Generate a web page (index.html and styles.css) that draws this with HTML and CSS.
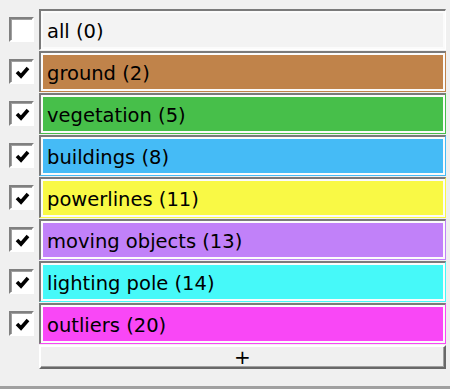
FILE: index.html
```html
<!DOCTYPE html>
<html lang="en">
  <head>
    <meta charset="UTF-8">
    <title>Classes</title>
    <link rel="stylesheet" href="styles.css">
  </head>
<body>
  <div class="panel">
    <div class="list">
      <div class="row">
        <span class="check"></span>
        <div class="frame plain"><div class="fill">all (0)</div></div>
      </div>
      <div class="row">
        <span class="check on"><svg viewBox="0 0 21 21"><polyline points="6,11 10,15 17,7"/></svg></span>
        <div class="frame ground"><div class="fill">ground (2)</div></div>
      </div>
      <div class="row">
        <span class="check on"><svg viewBox="0 0 21 21"><polyline points="6,11 10,15 17,7"/></svg></span>
        <div class="frame vegetation"><div class="fill">vegetation (5)</div></div>
      </div>
      <div class="row">
        <span class="check on"><svg viewBox="0 0 21 21"><polyline points="6,11 10,15 17,7"/></svg></span>
        <div class="frame buildings"><div class="fill">buildings (8)</div></div>
      </div>
      <div class="row">
        <span class="check on"><svg viewBox="0 0 21 21"><polyline points="6,11 10,15 17,7"/></svg></span>
        <div class="frame powerlines"><div class="fill">powerlines (11)</div></div>
      </div>
      <div class="row">
        <span class="check on"><svg viewBox="0 0 21 21"><polyline points="6,11 10,15 17,7"/></svg></span>
        <div class="frame moving"><div class="fill">moving objects (13)</div></div>
      </div>
      <div class="row">
        <span class="check on"><svg viewBox="0 0 21 21"><polyline points="6,11 10,15 17,7"/></svg></span>
        <div class="frame pole"><div class="fill">lighting pole (14)</div></div>
      </div>
      <div class="row">
        <span class="check on"><svg viewBox="0 0 21 21"><polyline points="6,11 10,15 17,7"/></svg></span>
        <div class="frame outliers"><div class="fill">outliers (20)</div></div>
      </div>
    </div>
    <button class="add">+</button>
  </div>
  <div class="bottom-edge"></div>
</body>
</html>
```

FILE: styles.css
```css
/* page */
body {
  margin: 0;
  background-color: #f0f0f0;
  font-family: "DejaVu Sans", Verdana, sans-serif;
  height: 389px;
  display: flex;
  flex-direction: column;
  overflow: hidden;
}

.panel {
  flex: 1;
  padding: 9px 4px 0 9px;
}

/* class rows */
.list {
  display: flex;
  flex-direction: column;
  gap: 1px;
}

.row {
  display: flex;
  align-items: center;
  gap: 5px;
  height: 41px;
}

.check {
  width: 21px;
  height: 21px;
  flex: none;
  background-color: #fff;
  border: 2px solid #fff;
  border-top-color: #808080;
  border-left-color: #808080;
  box-shadow: inset 1px 1px #a0a0a0;
}

.check svg {
  display: block;
  width: 21px;
  height: 21px;
}

.check polyline {
  fill: none;
  stroke: #000;
  stroke-width: 3.6;
  stroke-linejoin: miter;
}

.frame {
  flex: 1;
  height: 100%;
  box-sizing: border-box;
  border-top: 2px solid #7a7a7a;
  border-left: 2px solid #7a7a7a;
  border-right: 1px solid var(--c);
  border-bottom: 1px solid var(--c);
  padding: 2px;
  background-color: #fbfbfb;
}

.fill {
  height: 100%;
  box-sizing: border-box;
  background-color: var(--c);
  display: flex;
  align-items: center;
  padding: 2px 0 0 4px;
  font-size: 19.5px;
  color: #000;
}

.plain { --c: #f3f3f3; border-right-color: #fff; border-bottom-color: #fff; }
.ground { --c: #c0834a; }
.vegetation { --c: #47bf4a; }
.buildings { --c: #45bbf6; }
.powerlines { --c: #f9f945; }
.moving { --c: #c181f9; }
.pole { --c: #46f9f9; }
.outliers { --c: #f947f6; }

/* add button */
.add {
  display: block;
  height: 24px;
  margin-top: 1px;
  margin-left: 30px;
  width: calc(100% - 30px);
  background-color: #f0f0f0;
  border: 2px solid #696969;
  border-top-color: #fff;
  border-left-color: #fff;
  box-shadow: inset -1px -1px #a0a0a0;
  font-family: "DejaVu Sans", Verdana, sans-serif;
  font-size: 20px;
  line-height: 18px;
  padding: 0;
  color: #000;
}

.bottom-edge {
  height: 3px;
  background-color: #a0a0a0;
}
```
